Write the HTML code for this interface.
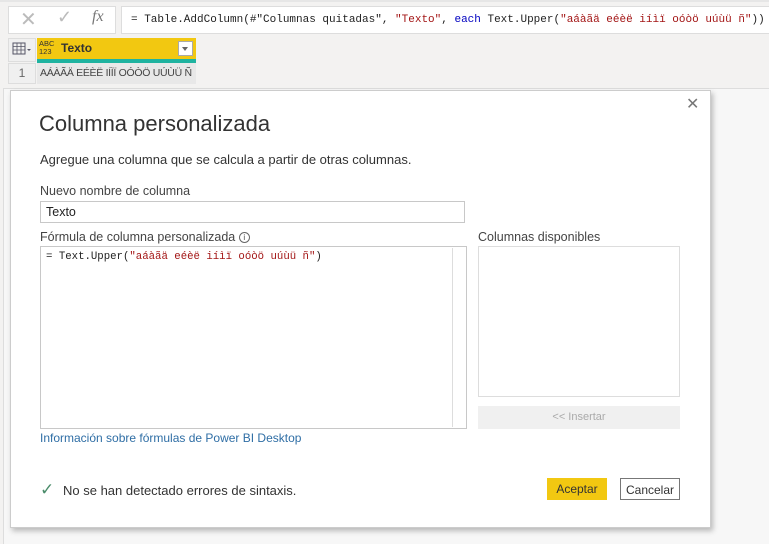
<!DOCTYPE html>
<html><head><meta charset="utf-8"><style>
*{box-sizing:border-box;margin:0;padding:0}
body{width:769px;height:544px;background:#f3f2f1;font-family:"Segoe UI","Liberation Sans",sans-serif;position:relative;overflow:hidden;color:#333}
.abs{position:absolute}
.mono{font-family:"Liberation Mono",monospace;font-size:11px}
.lbl{font-size:12.5px;color:#444;position:absolute}
</style></head><body>
<div class="abs" style="left:0;top:0;width:769px;height:2px;background:#e6e6e6"></div>
<div class="abs" style="left:8px;top:6px;width:108px;height:28px;background:#fff;border:1px solid #ddd"></div>
<div class="abs" style="left:20px;top:7px;font-size:20px;color:#bbb">✕</div>
<div class="abs" style="left:57px;top:7px;font-size:18px;color:#bbb">✓</div>
<div class="abs" style="left:92px;top:8px;font-size:16px;color:#777;font-style:italic;font-family:'Liberation Serif',serif">fx</div>
<div class="abs mono" style="left:121px;top:6px;width:660px;height:28px;background:#fff;border:1px solid #ddd;padding:7px 9px;white-space:nowrap;color:#222">= Table.AddColumn(#"Columnas quitadas", <span style="color:#a31515">"Texto"</span>, <span style="color:#0000c0">each</span> Text.Upper(<span style="color:#a31515">"aáàãä eéèë iíìï oóòö uúùü ñ"</span>))</div>
<div class="abs" style="left:8px;top:38px;width:28px;height:24px;background:#f0f0f0;border:1px solid #ddd"></div>
<svg class="abs" style="left:12px;top:42px" width="22" height="14"><rect x="1" y="1" width="12" height="11" fill="none" stroke="#556"/><path d="M1 4.5h12M1 8h12M5 1v11M9 1v11" stroke="#556" stroke-width=".8"/><path d="M15 7l2 2 2-2z" fill="#556"/></svg>
<div class="abs" style="left:37px;top:38px;width:159px;height:21px;background:#f2c811"></div>
<div class="abs" style="left:37px;top:59px;width:159px;height:4px;background:#1fb3a0"></div>
<div class="abs" style="left:39px;top:40px;font-size:7.5px;line-height:8px;color:#333">ABC<br>123</div>
<div class="abs" style="left:61px;top:41px;font-size:12px;font-weight:bold;color:#333">Texto</div>
<div class="abs" style="left:178px;top:41px;width:15px;height:15px;background:#fff;border:1px solid #aaa"></div>
<div class="abs" style="left:182px;top:47px;border:3.5px solid transparent;border-top:4px solid #666"></div>
<div class="abs" style="left:8px;top:63px;width:28px;height:21px;background:#f0f0f0;border:1px solid #ddd;font-size:12px;color:#666;text-align:center;padding-top:2px">1</div>
<div class="abs" style="left:37px;top:63px;width:159px;height:21px;background:#e8e8e8;font-size:10.5px;letter-spacing:-0.3px;color:#444;padding:4px 3px;white-space:nowrap;overflow:hidden;text-overflow:ellipsis">AÁÀÃÄ EÉÈË IÍÌÏ OÓÒÖ UÚÙÜ Ñ</div>
<div class="abs" style="left:3px;top:88px;width:766px;height:456px;background:#f7f7f7;border-left:1px solid #ddd;border-top:1px solid #ddd"></div>
<div class="abs" style="left:10px;top:90px;width:701px;height:438px;background:#fff;border:1px solid #ccc;box-shadow:2px 3px 5px rgba(0,0,0,.25)"></div>
<div class="abs" style="left:686px;top:94px;font-size:16px;color:#777">✕</div>
<div class="abs" style="left:39px;top:111px;font-size:22px;color:#333;font-weight:300">Columna personalizada</div>
<div class="abs" style="left:40px;top:152px;font-size:13px;color:#333">Agregue una columna que se calcula a partir de otras columnas.</div>
<div class="lbl" style="left:40px;top:184px">Nuevo nombre de columna</div>
<div class="abs" style="left:40px;top:201px;width:425px;height:22px;border:1px solid #c8c8c8;font-size:12.5px;padding:3px 5px;color:#222">Texto</div>
<div class="lbl" style="left:40px;top:230px">Fórmula de columna personalizada <span style="display:inline-block;width:11px;height:11px;border:1px solid #666;border-radius:50%;font-size:8px;text-align:center;line-height:10px;vertical-align:1px">i</span></div>
<div class="abs" style="left:40px;top:246px;width:427px;height:183px;border:1px solid #c8c8c8"></div>
<div class="abs" style="left:452px;top:248px;width:1px;height:179px;background:#ddd"></div>
<div class="abs mono" style="left:46px;top:251px;color:#222;font-size:10.7px">= Text.Upper(<span style="color:#a31515">"aáàãä eéèë iíìï oóòö uúùü ñ"</span>)</div>
<div class="lbl" style="left:478px;top:230px">Columnas disponibles</div>
<div class="abs" style="left:478px;top:246px;width:202px;height:151px;border:1px solid #ddd"></div>
<div class="abs" style="left:478px;top:406px;width:202px;height:23px;background:#f0f0f0;font-size:11px;color:#aaa;text-align:center;padding-top:5px">&lt;&lt; Insertar</div>
<div class="abs" style="left:40px;top:431px;font-size:12px;color:#2f6ea5">Información sobre fórmulas de Power BI Desktop</div>
<div class="abs" style="left:40px;top:480px;font-size:17px;color:#4a8c6a">✓</div>
<div class="abs" style="left:63px;top:483px;font-size:13px;color:#333">No se han detectado errores de sintaxis.</div>
<div class="abs" style="left:547px;top:478px;width:60px;height:22px;background:#f2c811;font-size:12px;text-align:center;padding-top:4px;color:#333">Aceptar</div>
<div class="abs" style="left:620px;top:478px;width:60px;height:22px;border:1px solid #777;font-size:12px;text-align:center;padding-top:4px;color:#333">Cancelar</div>
</body></html>
